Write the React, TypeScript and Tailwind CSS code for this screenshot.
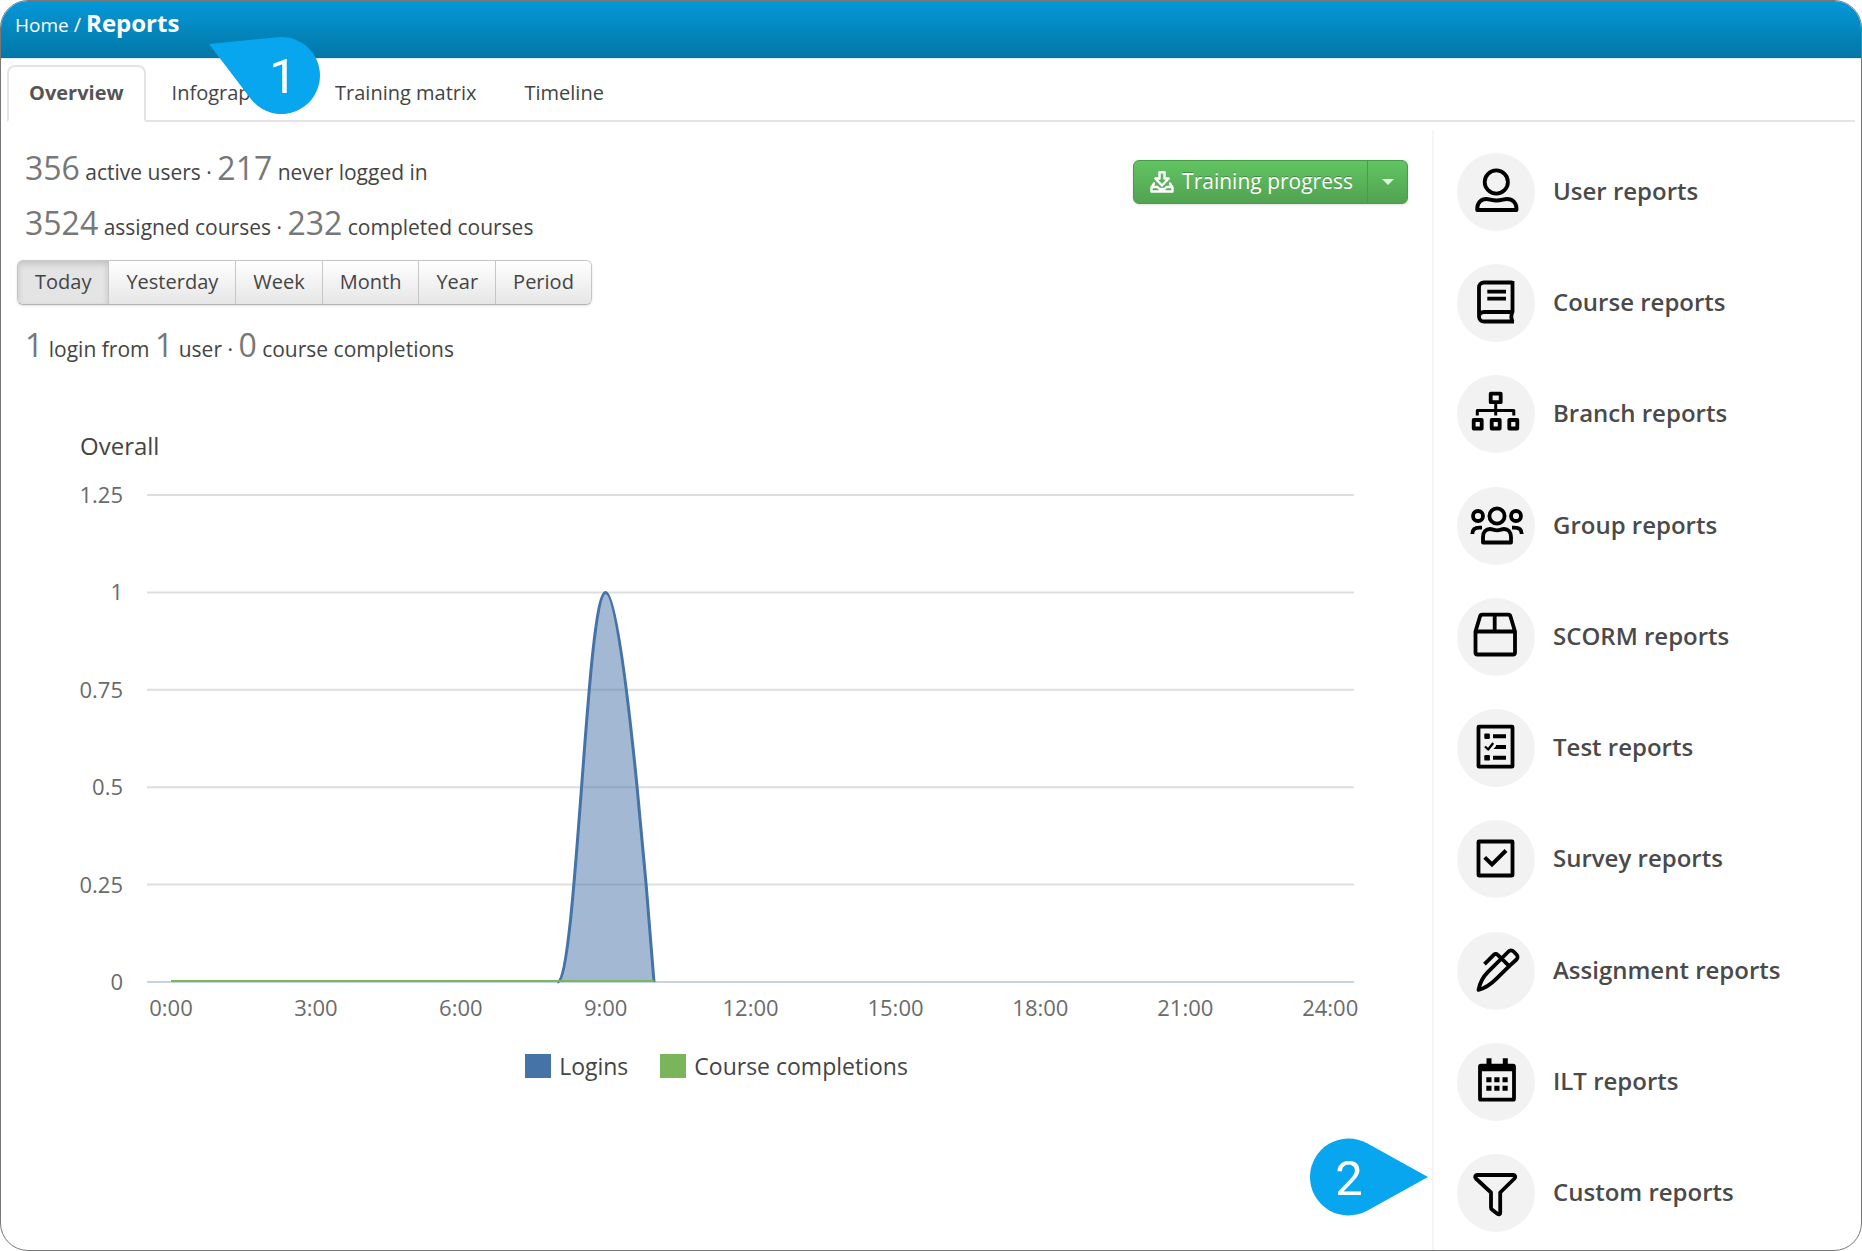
import { useState } from 'react';
import type { ReactNode } from 'react';
import clsx from 'clsx';

const tabs = ['Overview', 'Infographics', 'Training matrix', 'Timeline'];
const periods = ['Today', 'Yesterday', 'Week', 'Month', 'Year', 'Period'];

// Icons share one 78x78 grid, the size of the round badge behind them
const reports: { label: string; icon: ReactNode }[] = [
  {
    label: 'User reports',
    icon: (
      <>
        <circle cx="39.3" cy="29" r="11.6" />
        <path d="M20.2 57v-1.500c0-5.500 4-9.500 9-9.500 3.500 0 5 1.500 10.300 1.500S46.500 46 50 46c5.500 0 9.500 4 9.500 9.500V57z" />
      </>
    ),
  },
  {
    label: 'Course reports',
    icon: (
      <>
        <path d="M55.500 18.500H27a5 5 0 0 0-5 5v29a5 5 0 0 0 5 5h30M55.500 17v31H27a5 5 0 0 0-5 4.500M55.500 48c-1.500 3-1.500 6.500 0 9.500" />
        <path d="M30.300 27.700H49M30.300 34.600H49" strokeWidth="3.800" />
      </>
    ),
  },
  {
    label: 'Branch reports',
    icon: (
      <>
        <path d="M33.700 18.700h10v8.500h-10zM16.700 45h8v8.500h-8zM34.700 45h8v8.500h-8zM52.300 45h8v8.500h-8z" />
        <path d="M38.700 28v12.500M20.300 40.500v-5h36.500v5" strokeWidth="3" />
      </>
    ),
  },
  {
    label: 'Group reports',
    icon: (
      <>
        <circle cx="40" cy="29" r="7.600" />
        <circle cx="21" cy="29" r="5" />
        <circle cx="59" cy="29" r="5" />
        <path d="M26 55.500V50c0-5 3-8 7-8 2.500 0 4 1.300 7 1.300s4.500-1.300 7-1.300c4 0 7 3 7 8v5.500z" />
        <path d="M25 40.700h-2.500c-4.500 0-7.200 2.300-7.200 6.300M55 40.700h2.500c4.500 0 7.200 2.300 7.200 6.300" />
      </>
    ),
  },
  {
    label: 'SCORM reports',
    icon: (
      <path d="M18.500 33.500v21a2 2 0 0 0 2 2H56a2 2 0 0 0 2-2v-21l-4.500-15a2.500 2.500 0 0 0-2.300-1.800H25.300a2.500 2.500 0 0 0-2.300 1.800zM18.500 33.500H58M37.700 17v16" />
    ),
  },
  {
    label: 'Test reports',
    icon: (
      <>
        <rect x="21.500" y="17.700" width="34" height="40" rx="0.500" />
        <path d="M36 27.200h13M39 38h10M36 48.800h13" strokeWidth="4" />
        <path d="M28 37.500l3.200 3 5-6.500" strokeWidth="2.300" />
        <g fill="#000" stroke="none">
          <rect x="27.300" y="24.400" width="5.600" height="5.600" rx="1.200" />
          <rect x="27.300" y="46" width="5.600" height="5.600" rx="1.200" />
          <path d="M36.500 40l3.500-4v4z" />
        </g>
      </>
    ),
  },
  {
    label: 'Survey reports',
    icon: (
      <>
        <rect x="21.500" y="21.500" width="34" height="34" rx="0.500" />
        <path d="M27.700 37.300l7.300 7.200 14-14" strokeWidth="4" strokeLinejoin="miter" />
      </>
    ),
  },
  {
    label: 'Assignment reports',
    icon: (
      <>
        <path d="M21.500 57.800c1.500-8 5.500-14 9.500-18l13.500-13.300 7.700 7.700L39.500 46.700c-5 5-10 9.500-18 11.100z" />
        <path d="M44.500 26.500l7-7a3.500 3.500 0 0 1 5 0l3 3a3.500 3.500 0 0 1 0 5l-7.300 6.700M27.500 32.200l9.500-9.500a2.400 2.400 0 0 1 3.400 0l4.100 3.800" />
      </>
    ),
  },
  {
    label: 'ILT reports',
    icon: (
      <>
        <rect x="23" y="22.700" width="34" height="34" rx="1" />
        <path d="M23 25.300h34" strokeWidth="6" />
        <path d="M32 15.300v6M48.300 15.300v6" strokeWidth="5" />
        <path d="M29.300 36.800h5.200M37.300 36.800h5.200M45.500 36.800h5.200M29.300 45.200h5.200M37.300 45.200h5.200M45.500 45.200h5.200" strokeWidth="5" />
      </>
    ),
  },
  {
    label: 'Custom reports',
    icon: (
      <path d="M20 21h36.500c1.800 0 2.300 2.200 1 3.500L43.200 38.500v20.300c0 1.600-1.300 2-2.500 1.200l-5.500-4.200c-.8-.6-1.200-1.200-1.200-2.200V38.500L18.900 24.500c-1.300-1.300-.8-3.500 1.100-3.500z" />
    ),
  },
];

// Plot geometry, in the units of the chart's viewBox
const PLOT = { left: 146, right: 1353, top: 25, bottom: 512 };
const yTicks = [1.25, 1, 0.75, 0.5, 0.25, 0];
const xTicks = [0, 3, 6, 9, 12, 15, 18, 21, 24];
const xAt = (hour: number) => 170 + hour * 48.3;
const yAt = (value: number) => PLOT.bottom - (value / 1.25) * (PLOT.bottom - PLOT.top);

function OverallChart() {
  const peak = `L${xAt(8)} ${yAt(0)} C${xAt(8.4)} ${yAt(0)} ${xAt(8.6)} ${yAt(1)} ${xAt(9)} ${yAt(1)} C${xAt(9.4)} ${yAt(1)} ${xAt(10)} ${yAt(0)} ${xAt(10)} ${yAt(0)}`;

  return (
    <svg viewBox="0 0 1431 560" className="block w-full" role="img" aria-label="Overall">
      {yTicks.map((v) => (
        <g key={v}>
          <line
            x1={PLOT.left}
            x2={PLOT.right}
            y1={yAt(v)}
            y2={yAt(v)}
            stroke={v === 0 ? '#c5d3e2' : '#dedede'}
            strokeWidth="2"
          />
          <text x="122" y={yAt(v) + 8} textAnchor="end" className="fill-[#6b6b6b] text-[22px]">
            {v}
          </text>
        </g>
      ))}
      {xTicks.map((h) => (
        <text key={h} x={xAt(h)} y="546" textAnchor="middle" className="fill-[#6b6b6b] text-[22px]">
          {h}:00
        </text>
      ))}
      <path d={`M${xAt(0)} ${yAt(0)} ${peak}z`} fill="#4572a7" fillOpacity="0.5" />
      <path d={`M${xAt(8)} ${yAt(0)} ${peak}`} fill="none" stroke="#4572a7" strokeWidth="3" strokeLinejoin="round" />
      <line x1={xAt(0)} x2={xAt(10)} y1={yAt(0) - 1} y2={yAt(0) - 1} stroke="#7ab55c" strokeWidth="2" />
    </svg>
  );
}

function Stat({ items }: { items: [string, string][] }) {
  return (
    <p className="px-2 text-[21px] leading-none">
      {items.map(([value, text], i) => (
        <span key={text}>
          {i > 0 && ' '}
          <span className="text-[32px] leading-[55px] text-[#777]">{value}</span> {text}
        </span>
      ))}
    </p>
  );
}

export default function App() {
  const [tab, setTab] = useState('Overview');
  const [period, setPeriod] = useState('Today');

  return (
    <div className="flex min-h-screen flex-col overflow-hidden rounded-[28px] border border-[#777] bg-white font-['Open_Sans',sans-serif] text-[20px] text-[#444]">
      {/* Breadcrumb bar */}
      <header className="relative z-10 h-[58px] border-b border-[#dce8ee] bg-linear-to-b from-[#0598d9] to-[#0277a6] px-3.5 text-white">
        <nav className="flex items-baseline gap-[5px] leading-[44px]">
          <a href="#home" className="text-[19px]">Home</a>
          <span>/</span>
          <h1 className="text-[24px] font-bold">Reports</h1>
        </nav>
        <svg viewBox="0 0 112 80" className="absolute top-[35px] left-[208px] h-20 w-28">
          <path d="M0 8L68.700 1.200A38.500 38.500 0 1 1 41.900 62.900z" fill="#08a6ee" />
          <text x="74" y="57" textAnchor="middle" className="fill-white font-['Roboto'] text-[49px]">1</text>
        </svg>
      </header>

      {/* Tabs */}
      <div className="mx-[6px] flex border-b-2 border-[#e4e4e4] pt-1.5" role="tablist">
        {tabs.map((t) => (
          <button
            key={t}
            role="tab"
            aria-selected={t === tab}
            onClick={() => setTab(t)}
            className={clsx(
              '-mb-0.5 mr-1 h-[57px] rounded-t-lg border-2 px-5 pb-0.5',
              t === tab ? 'border-[#e4e4e4] border-b-white bg-white font-bold text-[#555]' : 'border-transparent'
            )}
          >
            {t}
          </button>
        ))}
      </div>

      <div className="flex flex-1">
        <main className="flex-1 pt-[18px]">
          <div className="flex items-start justify-between pr-6 pl-4">
            <div>
              <Stat items={[['356', 'active users ·'], ['217', 'never logged in']]} />
              <Stat items={[['3524', 'assigned courses ·'], ['232', 'completed courses']]} />
            </div>
            <div className="mt-5 flex h-11 rounded-md border border-[#479c47] bg-linear-to-b from-[#62c462] to-[#51a351] text-white shadow-sm">
              <button className="flex items-center gap-2 pr-3.5 pl-4 text-[21px] [text-shadow:0_-1px_0_rgba(0,0,0,0.25)]">
                <svg viewBox="0 0 24 22" className="h-[22px] w-6" fill="none" stroke="#fff" strokeWidth="2.400" strokeLinejoin="round">
                  <path d="M9.500 1.200h5v6.300h4.200L12 14.500 5.300 7.500h4.200z" />
                  <path d="M5 12.500H4l-2.500 4v4h21v-4l-2.500-4h-1M2 16h5.500l2 2h5l2-2H22" />
                </svg>
                Training progress
              </button>
              <button className="flex w-10 items-center justify-center border-l border-[#479c47]" aria-label="More">
                <svg viewBox="0 0 12 6" className="h-1.5 w-3">
                  <path d="M0 0h12L6 6z" fill="#dff0df" />
                </svg>
              </button>
            </div>
          </div>

          <div className="px-4">
            <div className="mt-2.5 flex w-fit overflow-hidden rounded-md border border-[#c6c6c6] border-b-[#b3b3b3] shadow-sm">
              {periods.map((p) => (
                <button
                  key={p}
                  onClick={() => setPeriod(p)}
                  className={clsx(
                    'h-[43px] border-r border-[#c6c6c6] px-[17px] pb-0.5 last:border-r-0',
                    p === period
                      ? 'bg-[#e4e4e4] shadow-[inset_0_3px_6px_rgba(0,0,0,0.15)]'
                      : 'bg-linear-to-b from-white to-[#e6e6e6]'
                  )}
                >
                  {p}
                </button>
              ))}
            </div>
            <div className="mt-3">
              <Stat items={[['1', 'login from'], ['1', 'user ·'], ['0', 'course completions']]} />
            </div>
          </div>

          {/* Chart */}
          <section className="mt-[57px]">
            <h2 className="px-[79px] text-[24px] leading-[34px]">Overall</h2>
            <div className="mt-[7px]">
              <OverallChart />
            </div>
            <ul className="mt-5 flex justify-center gap-8 text-[23px] leading-8">
              <li className="flex items-center gap-2">
                <span className="h-6 w-[26px] bg-[#4572a7]" />
                Logins
              </li>
              <li className="flex items-center gap-2">
                <span className="h-6 w-[26px] bg-[#7ab55c]" />
                Course completions
              </li>
            </ul>
          </section>
        </main>

        {/* Report types */}
        <aside className="mt-2 w-[429px] border-l-2 border-[#f5f5f5] pt-[23px] pb-[18px] pl-[23px]">
          <ul className="flex h-full flex-col justify-between">
            {reports.map(({ label, icon }) => (
              <li key={label} className="relative">
                {label === 'Custom reports' && (
                  <svg viewBox="0 0 118 78" className="absolute -top-4 right-full mr-[29px] h-[78px] w-[118px]">
                    <path d="M118 39L57.100 5.300A38.500 38.500 0 1 0 57.100 72.700z" fill="#08a6ee" />
                    <text x="39" y="57" textAnchor="middle" className="fill-white font-['Roboto'] text-[49px]">2</text>
                  </svg>
                )}
                <a href="#reports" className="flex items-center gap-[18px] text-[24px] font-semibold text-[#4a4a4a]">
                  <svg
                    viewBox="0 0 78 78"
                    className="size-[78px] shrink-0 rounded-full bg-[#f2f2f2]"
                    fill="none"
                    stroke="#000"
                    strokeWidth="3.800"
                    strokeLinejoin="round"
                  >
                    {icon}
                  </svg>
                  <span className="pb-0.5">{label}</span>
                </a>
              </li>
            ))}
          </ul>
        </aside>
      </div>
    </div>
  );
}
